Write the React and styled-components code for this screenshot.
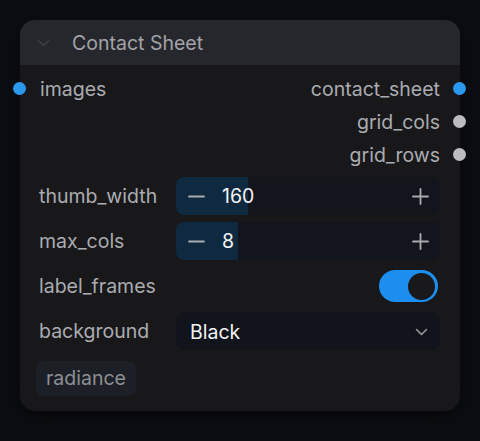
import styled, { createGlobalStyle } from "styled-components";

const GlobalStyle = createGlobalStyle`
  html, body {
    margin: 0;
    padding: 0;
    background: #0b0d12;
  }
  body {
    font-family: Inter, "Noto Sans", sans-serif;
    -webkit-font-smoothing: antialiased;
  }
`;

const Page = styled.div`
  padding: 20px;
  width: 440px;
`;

const Node = styled.div`
  position: relative;
  width: 440px;
  background: #18181b;
  border-radius: 15px;
  box-shadow: 0 6px 18px rgba(0, 0, 0, 0.45);
`;

const Header = styled.div`
  display: flex;
  align-items: center;
  gap: 22px;
  height: 45px;
  padding: 0 17px;
  background: #26272c;
  border-radius: 15px 15px 0 0;
  color: #a3a3a9;
  font-size: 19.5px;
`;

const Body = styled.div`
  display: flex;
  flex-direction: column;
  padding: 7px 20px 15px 20px;
`;

const SlotRow = styled.div`
  position: relative;
  display: flex;
  align-items: center;
  justify-content: ${(p) => (p.$out ? "flex-end" : "flex-start")};
  height: 33px;
  font-size: 19.5px;
  color: #abacb1;
`;

const Handle = styled.span`
  position: absolute;
  top: 50%;
  ${(p) => (p.$out ? "right: -26px;" : "left: -27px;")}
  width: 13px;
  height: 13px;
  margin-top: -6.5px;
  border-radius: 50%;
  background: ${(p) => p.$color};
`;

const Widgets = styled.div`
  display: flex;
  flex-direction: column;
  gap: 7px;
  margin-top: 6px;
`;

const WidgetRow = styled.div`
  display: grid;
  grid-template-columns: 136px 1fr;
  align-items: center;
  height: 38px;
`;

const Label = styled.span`
  margin-left: -1px;
  font-size: 19.5px;
  color: #abacb1;
`;

const Stepper = styled.div`
  position: relative;
  display: flex;
  align-items: center;
  height: 38px;
  border-radius: 8px;
  background: #12151b;
  overflow: hidden;
`;

const Fill = styled.div`
  position: absolute;
  left: 0;
  top: 0;
  bottom: 0;
  background: #0f2a40;
`;

const StepButton = styled.span`
  position: relative;
  display: flex;
  align-items: center;
  justify-content: center;
  width: 40px;
  height: 100%;
  color: #a9abb0;
  ${(p) => (p.$right ? "margin-left: auto;" : "")}
`;

const Value = styled.span`
  position: relative;
  margin-left: 6px;
  font-size: 19.5px;
  color: #f2f3f5;
`;

const ToggleCell = styled.div`
  display: flex;
  justify-content: flex-end;
  padding-right: 2px;
`;

const Toggle = styled.div`
  display: flex;
  align-items: center;
  justify-content: flex-end;
  width: 59px;
  height: 32px;
  padding: 0 3px;
  box-sizing: border-box;
  border-radius: 16px;
  background: #1b8ef0;
`;

const Knob = styled.span`
  width: 27px;
  height: 27px;
  border-radius: 50%;
  background: #19191b;
`;

const Select = styled.div`
  display: flex;
  align-items: center;
  justify-content: space-between;
  height: 38px;
  padding: 2px 12px 0 14px;
  box-sizing: border-box;
  border-radius: 8px;
  background: #11141a;
  font-size: 19.5px;
  color: #f2f3f5;
`;

const Chip = styled.span`
  align-self: flex-start;
  margin: 11px 0 0 -4px;
  padding: 0 10px;
  height: 35px;
  line-height: 35px;
  border-radius: 8px;
  background: #1c1f26;
  font-size: 19.5px;
  color: #8e8f95;
`;

const Chevron = ({ color, w = 13 }) => (
  <svg width={w} height="8" viewBox="0 0 13 8" fill="none">
    <path d="M1.5 1.5L6.5 6.5L11.5 1.5" stroke={color} strokeWidth="1.5" strokeLinecap="round" strokeLinejoin="round" />
  </svg>
);

const Minus = () => (
  <svg width="17" height="17" viewBox="0 0 17 17">
    <path d="M1 8.5H16" stroke="currentColor" strokeWidth="1.8" strokeLinecap="round" />
  </svg>
);

const Plus = () => (
  <svg width="17" height="17" viewBox="0 0 17 17">
    <path d="M1 8.5H16M8.5 1V16" stroke="currentColor" strokeWidth="1.8" strokeLinecap="round" />
  </svg>
);

function NumberWidget({ label, value, fill }) {
  return (
    <WidgetRow>
      <Label>{label}</Label>
      <Stepper>
        <Fill style={{ width: fill }} />
        <StepButton>
          <Minus />
        </StepButton>
        <Value>{value}</Value>
        <StepButton $right>
          <Plus />
        </StepButton>
      </Stepper>
    </WidgetRow>
  );
}

export default function App() {
  return (
    <>
      <GlobalStyle />
      <Page>
        <Node>
          <Header>
            <Chevron color="#3c3e48" />
            <span>Contact Sheet</span>
          </Header>
          <Body>
            <SlotRow>
              <Handle $color="#2b98f0" />
              images
            </SlotRow>
            <SlotRow $out style={{ marginTop: -33 }}>
              contact_sheet
              <Handle $out $color="#2b98f0" />
            </SlotRow>
            <SlotRow $out>
              grid_cols
              <Handle $out $color="#bdbdbf" />
            </SlotRow>
            <SlotRow $out>
              grid_rows
              <Handle $out $color="#bdbdbf" />
            </SlotRow>
            <Widgets>
              <NumberWidget label="thumb_width" value="160" fill={72} />
              <NumberWidget label="max_cols" value="8" fill={62} />
              <WidgetRow>
                <Label>label_frames</Label>
                <ToggleCell>
                  <Toggle>
                    <Knob />
                  </Toggle>
                </ToggleCell>
              </WidgetRow>
              <WidgetRow>
                <Label>background</Label>
                <Select>
                  <span>Black</span>
                  <Chevron color="#9a9ba0" />
                </Select>
              </WidgetRow>
            </Widgets>
            <Chip>radiance</Chip>
          </Body>
        </Node>
      </Page>
    </>
  );
}
